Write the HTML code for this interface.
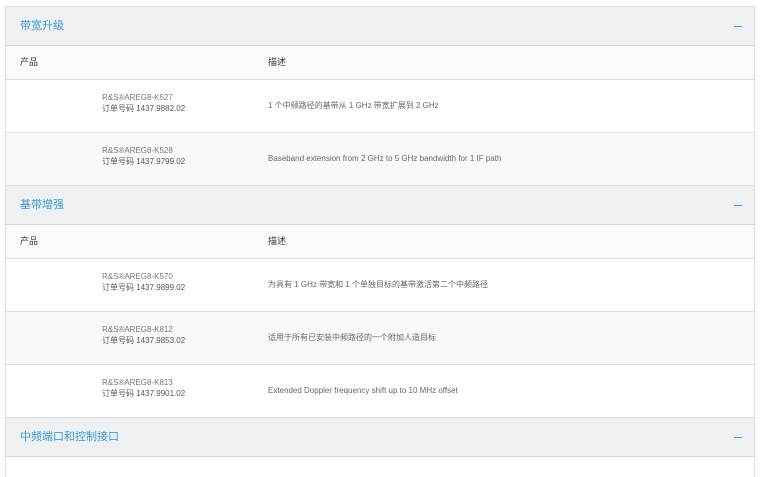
<!DOCTYPE html>
<html><head><meta charset="utf-8"><style>
body{margin:0;width:760px;height:466px;background:#fff;font-family:"Liberation Sans","Noto Sans CJK SC",sans-serif;overflow:hidden}
.wrap{position:absolute;left:5px;top:6px;width:748px;border-left:1px solid #dcdcdc;border-right:1px solid #dcdcdc;border-top:1px solid #dcdcdc}
.h{height:38px;background:#eef0f2;border-bottom:1px solid #d8d8d8;position:relative;color:#3b9ad6;font-size:11px;line-height:38px;padding-left:14px}
.h span{position:absolute;right:12px;top:19px;width:8px;height:1px;background:#3b9ad6}
.th{height:33px;background:#fafafa;border-bottom:1px solid #dedede;position:relative;font-size:9px;color:#333;line-height:33px}
.r{height:52px;border-bottom:1px solid #dedede;position:relative;font-size:8px;color:#777}
.g{background:#f9f9f9}
.c1{position:absolute;left:14px}
.c2{position:absolute;left:262px}
.p{position:absolute;left:96px;top:12px;line-height:11px}
.p b{font-weight:normal;color:#555}
.d{position:absolute;left:262px;top:0;line-height:52px;color:#666}
</style></head><body><div class="wrap">
<div class="h">带宽升级<span></span></div>
<div class="th"><span class="c1">产品</span><span class="c2">描述</span></div>
<div class="r"><div class="p">R&amp;S®AREG8-K527<br><b>订单号码 1437.9882.02</b></div><div class="d">1 个中频路径的基带从 1 GHz 带宽扩展到 2 GHz</div></div>
<div class="r g"><div class="p">R&amp;S®AREG8-K528<br><b>订单号码 1437.9799.02</b></div><div class="d">Baseband extension from 2 GHz to 5 GHz bandwidth for 1 IF path</div></div>
<div class="h">基带增强<span></span></div>
<div class="th"><span class="c1">产品</span><span class="c2">描述</span></div>
<div class="r"><div class="p">R&amp;S®AREG8-K570<br><b>订单号码 1437.9899.02</b></div><div class="d">为具有 1 GHz 带宽和 1 个单独目标的基带激活第二个中频路径</div></div>
<div class="r g"><div class="p">R&amp;S®AREG8-K812<br><b>订单号码 1437.9853.02</b></div><div class="d">适用于所有已安装中频路径的一个附加人造目标</div></div>
<div class="r"><div class="p">R&amp;S®AREG8-K813<br><b>订单号码 1437.9901.02</b></div><div class="d">Extended Doppler frequency shift up to 10 MHz offset</div></div>
<div class="h">中频端口和控制接口<span></span></div>
<div style="height:20px"></div>
</div></body></html>
